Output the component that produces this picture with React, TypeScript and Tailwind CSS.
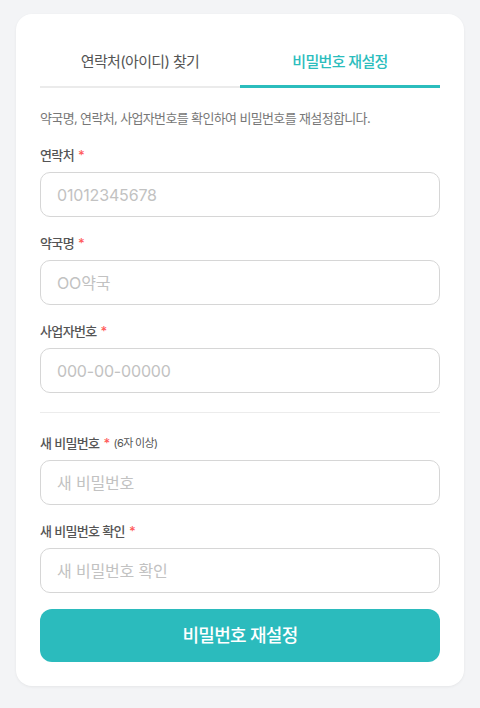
import React from "react";

const font = { fontFamily: '"Inter", "Noto Sans CJK KR", sans-serif', letterSpacing: "-0.04em" };

function Field({ label, placeholder, hint }: { label: string; placeholder: string; hint?: string }) {
  return (
    <div className="flex flex-col gap-[7px]">
      <div className="flex items-center h-5 text-[13px] font-medium text-[#555] leading-5">
        <span>{label}</span>
        <span className="text-[#ff5a5a] ml-1">*</span>
        {hint && <span className="ml-1 text-[11px] font-normal text-[#555]">{hint}</span>}
      </div>
      <input
        className="h-[45px] w-full rounded-[10px] border border-[#d6d6d6] bg-white px-4 text-[16px] text-[#333] placeholder:text-[#c2c2c2] outline-none"
        placeholder={placeholder}
        style={{ ...font, letterSpacing: "-0.01em" }}
      />
    </div>
  );
}

export default function App() {
  return (
    <div className="min-h-[708px] bg-[#f3f4f6] px-4 pt-[14px] pb-[22px]" style={font}>
      <div className="rounded-[16px] bg-white px-6 pt-6 pb-6 shadow-[0_1px_3px_rgba(0,0,0,0.06)]">
        <div className="flex">
          <div className="flex-1 h-[50px] flex items-center justify-center border-b-2 border-[#ebebeb] text-[15px] font-normal text-[#555]">
            연락처(아이디) 찾기
          </div>
          <div className="flex-1 h-[50px] flex items-center justify-center border-b-[3px] border-[#2bbdbd] text-[15px] font-medium text-[#2bbdbd] pt-[1px]">
            비밀번호 재설정
          </div>
        </div>
        <p className="mt-5 text-[13px] leading-5 text-[#777]">
          약국명, 연락처, 사업자번호를 확인하여 비밀번호를 재설정합니다.
        </p>
        <div className="mt-[17px] flex flex-col gap-4">
          <Field label="연락처" placeholder="01012345678" />
          <Field label="약국명" placeholder="OO약국" />
          <Field label="사업자번호" placeholder="000-00-00000" />
        </div>
        <div className="mt-[19px] mb-5 h-px bg-[#ececec]" />
        <div className="flex flex-col gap-4">
          <Field label="새 비밀번호" placeholder="새 비밀번호" hint="(6자 이상)" />
          <Field label="새 비밀번호 확인" placeholder="새 비밀번호 확인" />
        </div>
        <button className="mt-4 h-[53px] w-full rounded-[12px] bg-[#2bbbbd] text-[18px] font-medium text-white" style={font}>
          비밀번호 재설정
        </button>
      </div>
    </div>
  );
}
